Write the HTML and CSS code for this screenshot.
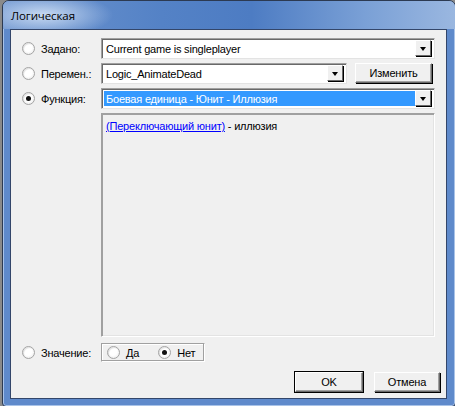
FILE: index.html
```html
<!DOCTYPE html>
<html lang="ru">

<head>
    <meta charset="UTF-8">
    <meta name="viewport" content="width=device-width, initial-scale=1.0">
    <title>Логическая</title>
    <link rel="stylesheet" href="styles.css">
</head>

<body>
    <div class="window">
        <div class="titlebar">
            <span class="title">Логическая</span>
        </div>
        <div class="client">
            <div class="form">
                <label class="opt"><span class="radio"></span>Задано:</label>
                <div class="combo">
                    <span class="value">Current game is singleplayer</span>
                    <span class="drop"></span>
                </div>

                <label class="opt"><span class="radio"></span>Перемен.:</label>
                <div class="pair">
                    <div class="combo">
                        <span class="value">Logic_AnimateDead</span>
                        <span class="drop"></span>
                    </div>
                    <button class="btn change">Изменить</button>
                </div>

                <label class="opt"><span class="radio checked"></span>Функция:</label>
                <div class="combo">
                    <span class="value selected">Боевая единица - Юнит - Иллюзия</span>
                    <span class="drop"></span>
                </div>

                <div></div>
                <div class="panel">
                    <a href="#" class="param">(Переключающий юнит)</a> - иллюзия
                </div>

                <label class="opt last"><span class="radio"></span>Значение:</label>
                <div class="group last">
                    <label class="opt"><span class="radio"></span>Да</label>
                    <label class="opt"><span class="radio checked"></span>Нет</label>
                </div>
            </div>

            <div class="actions">
                <button class="btn default">OK</button>
                <button class="btn">Отмена</button>
            </div>
        </div>
    </div>
</body>
</html>
```

FILE: styles.css
```css
body {
    margin: 0;
    background: #8a8a8a;
    font-family: "Liberation Sans", Arial, sans-serif;
    font-size: 11px;
    letter-spacing: -0.2px;
    color: #000;
}

.window {
    width: 452px;
    height: 405px;
    margin-left: 2px;
    border: 1px solid #2c3a52;
    border-radius: 7px 7px 4px 4px;
    background: #5f8acb;
    box-shadow: inset 0 0 0 1px #a9c3e8;
    display: flex;
    flex-direction: column;
    overflow: hidden;
}

.titlebar {
    height: 28px;
    flex-shrink: 0;
    display: flex;
    align-items: center;
    padding-left: 8px;
    background:
        radial-gradient(ellipse 70px 22px at 40px 14px, rgba(205, 222, 244, 0.95), rgba(205, 222, 244, 0) 100%),
        linear-gradient(90deg, #6e95cf 0%, #5482c6 35%, #4d7cc3 55%, #7aa0d6 80%, #9ab7e0 100%);
}

.title {
    font-family: "Open Sans", "DejaVu Sans", sans-serif;
    font-size: 11.5px;
    letter-spacing: -0.1px;
    color: #000;
}

.client {
    flex: 1;
    margin: 0 8px 7px 7px;
    border: 1px solid #33466a;
    background: #f0f0f0;
    display: flex;
    flex-direction: column;
}

.form {
    display: grid;
    grid-template-columns: 79px 1fr;
    grid-template-rows: 21px 21px 21px 224px 21px;
    row-gap: 4px;
    padding: 8px 11px 0 11px;
}

.opt {
    display: flex;
    align-items: center;
    gap: 6px;
    white-space: nowrap;
}

.last {
    margin-top: 2px;
}

.radio {
    width: 11px;
    height: 11px;
    border-radius: 50%;
    border: 1px solid #a4a4a4;
    background: radial-gradient(circle at 45% 40%, #ffffff 45%, #e2e2e2 100%);
    box-shadow: inset 1px 1px 1px rgba(0, 0, 0, 0.12);
    position: relative;
    flex-shrink: 0;
}

.radio.checked::after {
    content: "";
    position: absolute;
    left: 3px;
    top: 3px;
    width: 5px;
    height: 5px;
    border-radius: 50%;
    background: #111;
}

.combo {
    display: flex;
    align-items: center;
    background: #fff;
    border: 1px solid #a0a0a0;
    border-right-color: #e3e3e3;
    border-bottom-color: #e3e3e3;
    box-shadow: inset 1px 1px 0 #696969;
    padding: 2px;
    min-width: 0;
}

.value {
    flex: 1;
    height: 100%;
    display: flex;
    align-items: center;
    padding-left: 2px;
    white-space: nowrap;
    overflow: hidden;
}

.value.selected {
    background: #3399ff;
    color: #fff;
}

.drop {
    width: 16px;
    height: 16px;
    flex-shrink: 0;
    background: #f0f0f0;
    border: 1px solid #fff;
    border-right-color: #696969;
    border-bottom-color: #696969;
    box-shadow: 1px 1px 0 #000;
    position: relative;
    box-sizing: border-box;
    margin-right: 1px;
    margin-bottom: 1px;
}

.drop::after {
    content: "";
    position: absolute;
    left: 4px;
    top: 6px;
    border-left: 3.5px solid transparent;
    border-right: 3.5px solid transparent;
    border-top: 4px solid #000;
}

.pair {
    display: flex;
    gap: 8px;
}

.pair .combo {
    width: 246px;
    box-sizing: border-box;
}

.btn {
    font-family: "Liberation Sans", Arial, sans-serif;
    font-size: 11px;
    letter-spacing: -0.2px;
    color: #000;
    background: #f0f0f0;
    border: 1px solid #fff;
    border-right-color: #696969;
    border-bottom-color: #696969;
    box-shadow: 1px 1px 0 #000, inset -1px -1px 0 #a0a0a0;
    padding: 0;
    cursor: pointer;
}

.change {
    width: 77px;
    height: 20px;
}

.panel {
    border: 1px solid #a0a0a0;
    border-right-color: #fff;
    border-bottom-color: #fff;
    box-shadow: 1px 1px 0 #a0a0a0 inset, -1px -1px 0 #e3e3e3 inset;
    padding: 6px 4px;
}

.param {
    color: #0000ff;
    text-decoration: underline;
}

.group {
    width: 104px;
    box-sizing: border-box;
    display: flex;
    align-items: center;
    gap: 19px;
    padding-left: 5px;
    border: 1px solid #a0a0a0;
    border-right-color: #fff;
    border-bottom-color: #fff;
    box-shadow: inset -1px -1px 0 #a0a0a0, inset 1px 1px 0 #fff;
}

.group .opt {
    gap: 6px;
}

.actions {
    display: flex;
    justify-content: flex-end;
    gap: 11px;
    padding: 10px 6px 0 0;
}

.actions .btn {
    width: 66px;
    height: 20px;
}

.btn.default {
    width: 68px;
    outline: 1px solid #000;
}
```
